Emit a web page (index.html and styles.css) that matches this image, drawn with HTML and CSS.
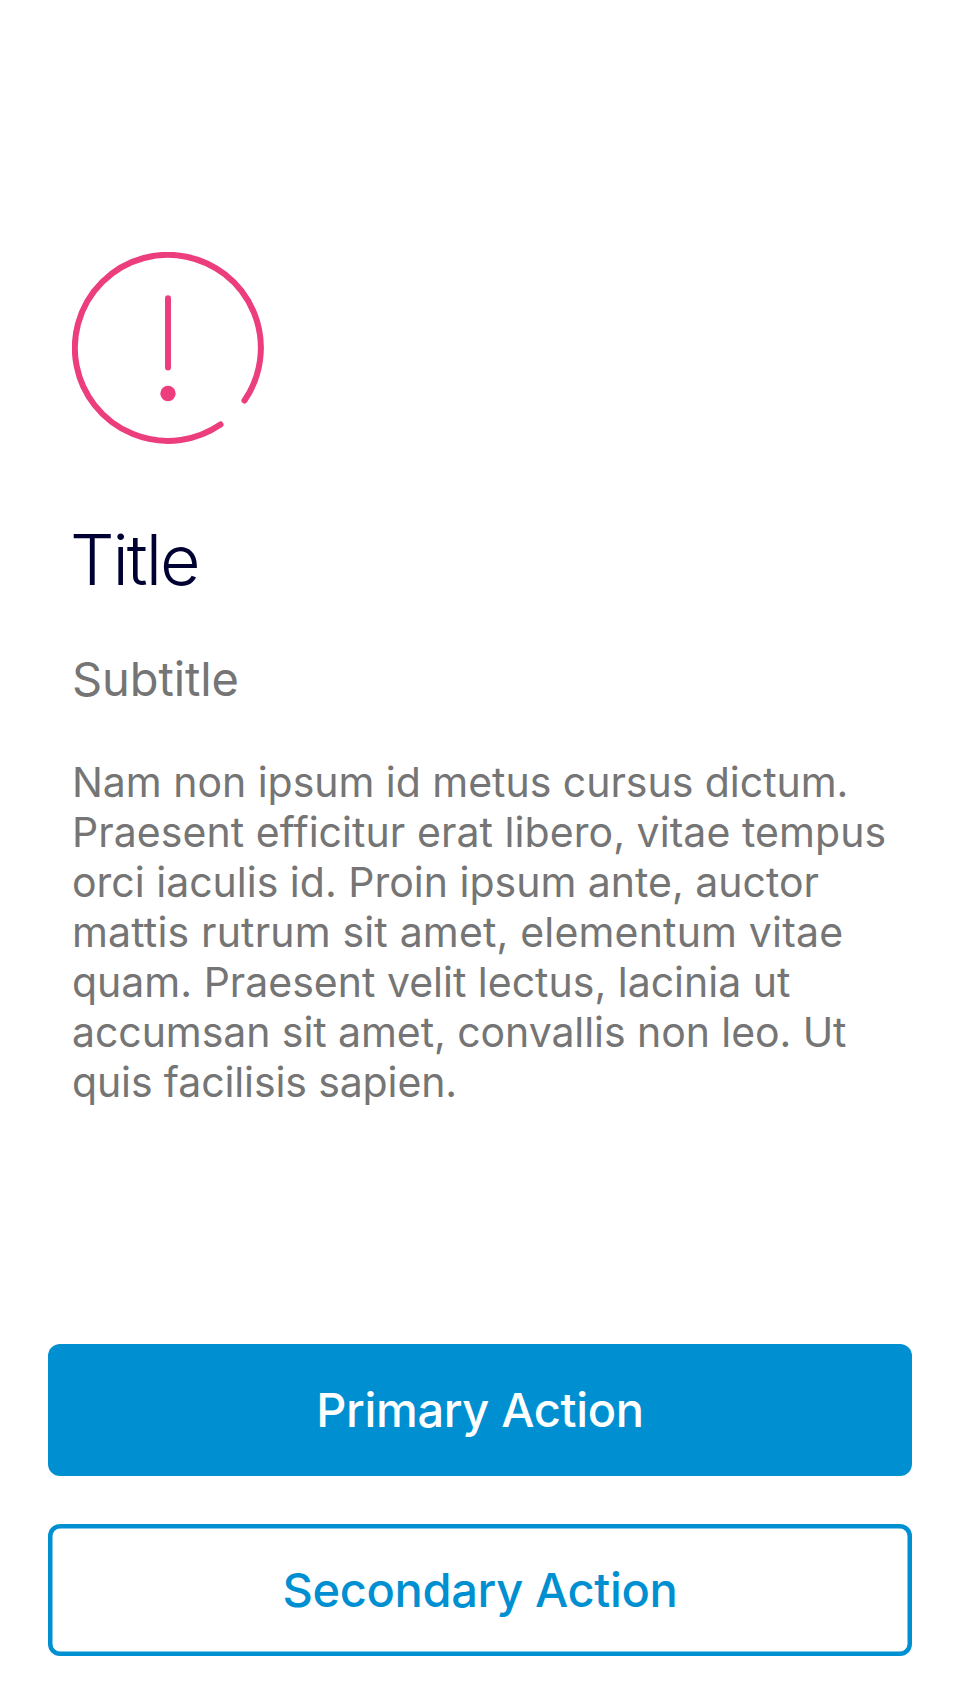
FILE: index.html
```html
<!DOCTYPE html>
<html lang="en">
<head>
<meta charset="utf-8">
<meta name="viewport" content="width=device-width">
<title>Title</title>
<link rel="stylesheet" href="styles.css">
</head>
<body>
<main class="feedback">
  <section class="content">
    <svg class="alert-icon" viewBox="0 0 192 192" aria-hidden="true">
      <path class="stroke" d="M148.5 172.5A93 93 0 1 1 172.5 148.5"/>
      <path class="stroke" d="M96 46.3V115.5"/>
      <circle class="dot" cx="96" cy="141.5" r="7.7"/>
    </svg>
    <h1 class="title">Title</h1>
    <p class="subtitle">Subtitle</p>
    <p class="description"><span class="line l1">Nam non ipsum id metus cursus dictum.</span><span class="line l2">Praesent efficitur erat libero, vitae tempus</span><span class="line l3">orci iaculis id. Proin ipsum ante, auctor</span><span class="line l4">mattis rutrum sit amet, elementum vitae</span><span class="line l5">quam. Praesent velit lectus, lacinia ut</span><span class="line l6">accumsan sit amet, convallis non leo. Ut</span><span class="line l7">quis facilisis sapien.</span></p>
  </section>
  <footer class="actions">
    <button class="button primary">Primary Action</button>
    <button class="button secondary">Secondary Action</button>
  </footer>
</main>
</body>
</html>
```
FILE: styles.css
```css
* { box-sizing: border-box; }
body { margin: 0; background: #fff; font-family: Inter, sans-serif; }
.feedback { display: flex; flex-direction: column; justify-content: space-between; height: 1704px; padding: 252px 48px 48px; }
.content { padding: 0 24px; }
.alert-icon { display: block; width: 192px; height: 192px; }
.stroke { fill: none; stroke: #ec3d7d; stroke-width: 6; stroke-linecap: round; }
.dot { fill: #ec3d7d; }
.title { margin: 74px 0 0 -2px; font-size: 70px; font-weight: 300; line-height: 84px; letter-spacing: -2px; color: #000033; }
.subtitle { margin: 47px 0 0; font-size: 47px; line-height: 60px; letter-spacing: -0.1px; color: #757575; }
.description { margin: 48px 0 0; font-size: 41px; line-height: 50px; color: #757575; }
.line { display: block; white-space: nowrap; }
.l1 { letter-spacing: -0.03px; }
.l2 { letter-spacing: 0.06px; }
.l4 { letter-spacing: 0.17px; }
.l6 { letter-spacing: -0.07px; }
.l7 { letter-spacing: -0.12px; }
.actions { display: flex; flex-direction: column; gap: 48px; }
.button { height: 132px; border: 0; border-radius: 12px; font: 500 47px/60px Inter, sans-serif; letter-spacing: -0.35px; }
.primary { background: #0090d1; color: #fff; }
.secondary { background: #fff; color: #0090d1; box-shadow: inset 0 0 0 4.5px #0090d1; }
```
